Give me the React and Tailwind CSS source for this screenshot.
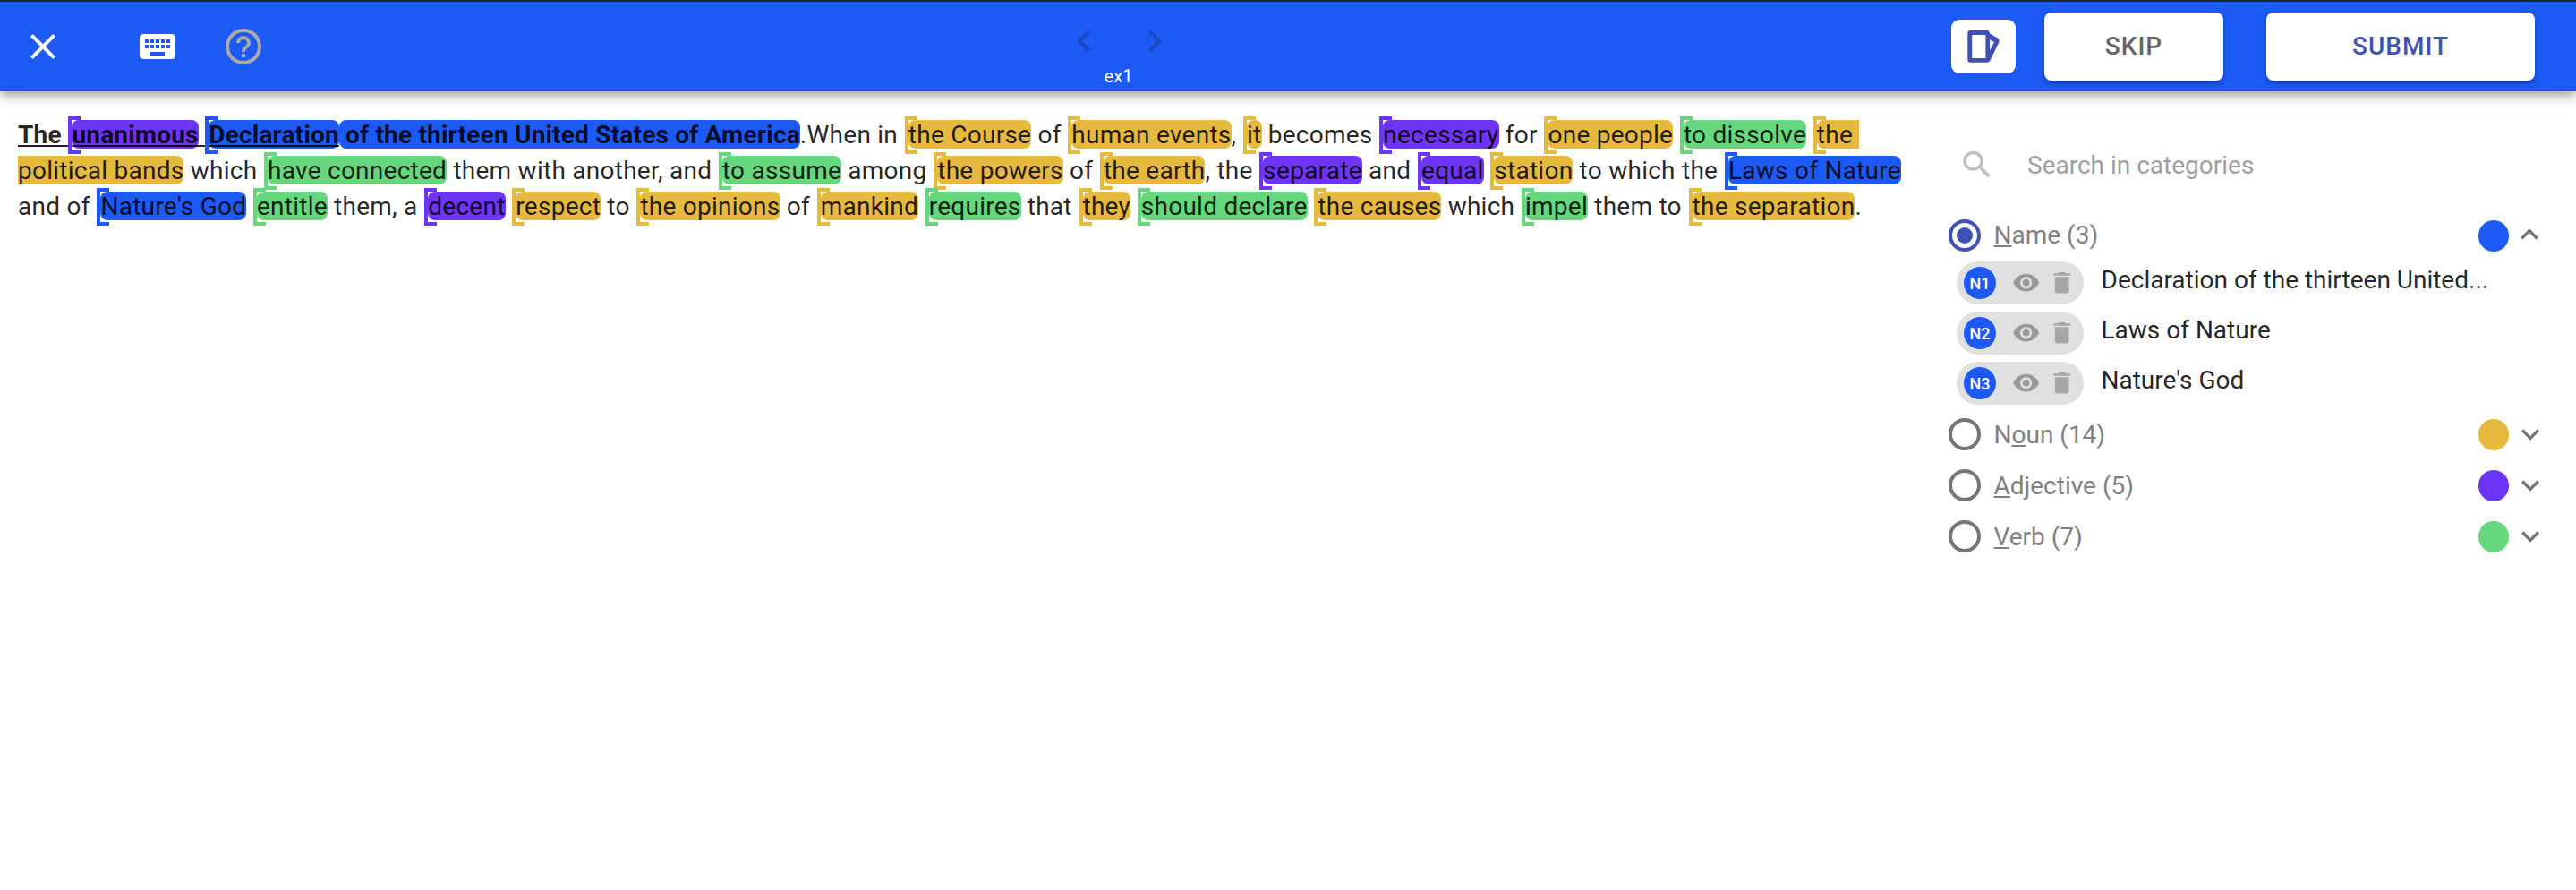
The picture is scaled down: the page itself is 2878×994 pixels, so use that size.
import React from "react";

const FILL = {
  name: "bg-[#1d5af5]",
  noun: "bg-[#e6b93f]",
  adj: "bg-[#6d34f6]",
  verb: "bg-[#66d77c]",
};
const EDGE = {
  name: "border-[#1d5af5]",
  noun: "border-[#e6b93f]",
  adj: "border-[#6d34f6]",
  verb: "border-[#66d77c]",
};

const HEADING = [
  { t: "The ", u: true },
  { t: "unanimous", c: "adj", u: true },
  { t: " ", u: true },
  { t: "Declaration", c: "name", u: true },
  { t: " of the thirteen United States of America", c: "name", cont: true },
];

const LINES = [
  [
    { t: ".When in " },
    { t: "the Course", c: "noun" },
    { t: " of " },
    { t: "human events", c: "noun" },
    { t: ", " },
    { t: "it", c: "noun" },
    { t: " becomes " },
    { t: "necessary", c: "adj" },
    { t: " for " },
    { t: "one people", c: "noun" },
    { t: " " },
    { t: "to dissolve", c: "verb" },
    { t: " " },
    { t: "the ", c: "noun", open: true },
  ],
  [
    { t: "political bands", c: "noun", tail: true },
    { t: " which " },
    { t: "have connected", c: "verb" },
    { t: " them with another, and " },
    { t: "to assume", c: "verb" },
    { t: " among " },
    { t: "the powers", c: "noun" },
    { t: " of " },
    { t: "the earth", c: "noun" },
    { t: ", the " },
    { t: "separate", c: "adj" },
    { t: " and " },
    { t: "equal", c: "adj" },
    { t: " " },
    { t: "station", c: "noun" },
    { t: " to which the " },
    { t: "Laws of Nature", c: "name" },
  ],
  [
    { t: "and of " },
    { t: "Nature's God", c: "name" },
    { t: " " },
    { t: "entitle", c: "verb" },
    { t: " them, a " },
    { t: "decent", c: "adj" },
    { t: " " },
    { t: "respect", c: "noun" },
    { t: " to " },
    { t: "the opinions", c: "noun" },
    { t: " of " },
    { t: "mankind", c: "noun" },
    { t: " " },
    { t: "requires", c: "verb" },
    { t: " that " },
    { t: "they", c: "noun" },
    { t: " " },
    { t: "should declare", c: "verb" },
    { t: " " },
    { t: "the causes", c: "noun" },
    { t: " which " },
    { t: "impel", c: "verb" },
    { t: " them to " },
    { t: "the separation", c: "noun" },
    { t: "." },
  ],
];

function Segment({ s }) {
  const line = s.u ? "underline decoration-2 underline-offset-[2px] [text-decoration-skip-ink:none]" : "";
  if (!s.c) return <span className={`h-8 ${line}`}>{s.t}</span>;
  const shape = s.open ? "rounded-l-lg" : s.tail ? "rounded-r-lg" : "rounded-lg";
  const bracket = !s.cont && !s.tail;
  return (
    <span className={`relative h-8 ${FILL[s.c]} ${shape} ${line} ${bracket ? "ml-[4.5px]" : ""}`}>
      {bracket && (
        <span className={`absolute -left-1 -top-1 h-[42px] w-[14px] border-4 border-r-0 ${EDGE[s.c]}`} />
      )}
      <span className="relative">{s.t}</span>
    </span>
  );
}

function Icon({ d, className }) {
  return (
    <svg viewBox="0 0 24 24" fill="currentColor" className={`shrink-0 ${className}`}>
      <path d={d} />
    </svg>
  );
}

const CLOSE = "M19 6.41L17.59 5 12 10.59 6.41 5 5 6.41 10.59 12 5 17.59 6.41 19 12 13.41 17.59 19 19 17.59 13.41 12z";
const KEYBOARD = "M20 5H4c-1.1 0-1.99.9-1.99 2L2 17c0 1.1.9 2 2 2h16c1.1 0 2-.9 2-2V7c0-1.1-.9-2-2-2zm-9 3h2v2h-2V8zm0 3h2v2h-2v-2zM8 8h2v2H8V8zm0 3h2v2H8v-2zm-1 2H5v-2h2v2zm0-3H5V8h2v2zm9 7H8v-2h8v2zm0-4h-2v-2h2v2zm0-3h-2V8h2v2zm3 3h-2v-2h2v2zm0-3h-2V8h2v2z";
const HELP = "M11 18h2v-2h-2v2zm1-16C6.48 2 2 6.48 2 12s4.48 10 10 10 10-4.48 10-10S17.52 2 12 2zm0 18c-4.41 0-8-3.59-8-8s3.59-8 8-8 8 3.59 8 8-3.59 8-8 8zm0-14c-2.21 0-4 1.79-4 4h2c0-1.1.9-2 2-2s2 .9 2 2c0 2-3 1.75-3 5h2c0-2.25 3-2.5 3-5 0-2.21-1.79-4-4-4z";
const LEFT = "M15.41 7.41L14 6l-6 6 6 6 1.41-1.41L10.83 12z";
const RIGHT = "M10 6L8.59 7.41 13.17 12l-4.58 4.59L10 18l6-6z";
const LESS = "M12 8l-6 6 1.41 1.41L12 10.83l4.59 4.58L18 14z";
const MORE = "M16.59 8.59L12 13.17 7.41 8.59 6 10l6 6 6-6z";
const EYE = "M12 4.5C7 4.5 2.73 7.61 1 12c1.73 4.39 6 7.5 11 7.5s9.27-3.11 11-7.5c-1.73-4.39-6-7.5-11-7.5zM12 17c-2.76 0-5-2.24-5-5s2.24-5 5-5 5 2.24 5 5-2.24 5-5 5zm0-8c-1.66 0-3 1.34-3 3s1.34 3 3 3 3-1.34 3-3-1.34-3-3-3z";
const TRASH = "M6 19c0 1.1.9 2 2 2h8c1.1 0 2-.9 2-2V7H6v12zM19 4h-3.5l-1-1h-5l-1 1H5v2h14V4z";
const SEARCH = "M15.5 14h-.79l-.28-.27C15.41 12.59 16 11.11 16 9.5 16 5.91 13.09 3 9.5 3S3 5.91 3 9.5 5.91 16 9.5 16c1.61 0 3.09-.59 4.23-1.57l.27.28v.79l5 4.99L20.49 19l-4.99-5zm-6 0C7.01 14 5 11.99 5 9.5S7.01 5 9.5 5 14 7.01 14 9.5 11.99 14 9.5 14z";

const RAISED = "shadow-[0_6px_2px_-4px_rgba(0,0,0,0.2),0_4px_4px_0_rgba(0,0,0,0.14),0_2px_10px_0_rgba(0,0,0,0.12)]";

function Header() {
  return (
    <header className="relative z-10 flex h-[102px] items-center border-t-2 border-[#222529] bg-[#1d5af5] pl-6 pr-[46px] shadow-[0_4px_8px_-2px_rgba(0,0,0,0.2),0_8px_10px_0_rgba(0,0,0,0.14),0_2px_20px_0_rgba(0,0,0,0.12)]">
      <Icon d={CLOSE} className="size-12 text-white" />
      <Icon d={KEYBOARD} className="ml-20 size-12 text-white" />
      <Icon d={HELP} className="ml-12 size-12 text-[#a9a9a9]" />
      <div className="ml-[891px] flex h-full w-[127px] flex-col pt-5">
        <div className="flex justify-between text-[#1947bd]">
          <Icon d={LEFT} className="size-12" />
          <Icon d={RIGHT} className="size-12" />
        </div>
        <span className="mt-[3px] pr-[2px] text-center text-[20px] leading-6 text-white">ex1</span>
      </div>
      <div className="ml-auto flex items-center">
        <button className="flex h-[60px] w-[72px] items-center justify-center rounded-[9px] bg-white text-[#3f51b5]">
          <svg viewBox="0 0 36 36" fill="currentColor" fillRule="evenodd" className="size-9">
            <path d="M3.5 0H22q2.600 0 3 3.600L33.500 8.200Q36.500 10 35.200 13.600L26 32.500Q24.400 35.700 21.500 35.700H3.500Q0.300 35.700 0.300 32.500V3.200Q0.300 0 3.500 0ZM5.200 5V31H20.400V5ZM25 10.300V22.500L30 13Z" />
          </svg>
        </button>
        <button className={`ml-8 h-[76px] w-[200px] rounded-lg bg-white text-[28px] font-medium tracking-[1px] text-[#666] ${RAISED}`}>
          SKIP
        </button>
        <button className={`ml-12 h-[76px] w-[300px] rounded-lg bg-white text-[28px] font-medium tracking-[1px] text-[#3f51b5] ${RAISED}`}>
          SUBMIT
        </button>
      </div>
    </header>
  );
}

function Category({ before = "", hotkey, after, dot, open, className = "" }) {
  return (
    <div className={`flex h-14 items-center ${className}`}>
      <span
        className={`flex size-9 items-center justify-center rounded-full border-4 ${open ? "border-[#3f51b5]" : "border-[#757575]"}`}
      >
        {open && <span className="size-[18px] rounded-full bg-[#3f51b5]" />}
      </span>
      <span className={`ml-[14.5px] text-[28px] leading-8 text-[#808080] ${open ? "" : "pt-[2px]"}`}>
        {before}
        <span className="underline decoration-2 underline-offset-[2px]">{hotkey}</span>
        {after}
      </span>
      <span className={`ml-auto h-[35px] w-[34px] rounded-full ${dot}`} />
      <Icon
        d={open ? LESS : MORE}
        className={`size-10 text-[#757575] ${open ? "mb-[2px] ml-[3px] mr-8" : "ml-1 mr-[31px]"}`}
      />
    </div>
  );
}

function Entry({ id, text }) {
  return (
    <div className="flex h-12">
      <div className="flex h-12 w-[142px] items-center rounded-full bg-[#e0e0e0] pl-2">
        <span className="flex size-9 items-center justify-center rounded-full bg-[#1d5af5] text-[18px] font-medium text-white">
          {id}
        </span>
        <Icon d={EYE} className="ml-[18px] size-[31.300px] text-[#999]" />
        <Icon d={TRASH} className="ml-[9px] size-[31.300px] text-[#a6a6a6]" />
      </div>
      <span className="ml-[19.5px] pt-[5px] text-[28px] leading-8 text-black/87">{text}</span>
    </div>
  );
}

export default function App() {
  return (
    <div className="min-h-[994px] bg-white font-[Roboto,sans-serif]">
      <Header />
      <main className="flex">
        <article className="flex w-[2177px] flex-col pl-5 pt-7 text-[28px] leading-[34px] text-black/87">
          {LINES.map((line, i) => (
            <div key={i} className="flex h-10 items-start pt-1 whitespace-pre tracking-[0.26px]">
              {i === 0 && (
                <span className="flex font-bold tracking-[0.19px]">
                  {HEADING.map((s, j) => (
                    <Segment key={j} s={s} />
                  ))}
                </span>
              )}
              {line.map((s, j) => (
                <Segment key={j} s={s} />
              ))}
            </div>
          ))}
        </article>
        <aside className="flex w-[701px] flex-col">
          <label className="flex h-[133px] items-center pt-[31px]">
            <svg viewBox="0 0 24 24" preserveAspectRatio="none" fill="currentColor" className="ml-[10.5px] h-10 w-[42px] text-[#bdbdbd]">
              <path d={SEARCH} />
            </svg>
            <input
              placeholder="Search in categories"
              className="ml-[35.5px] mt-[2px] h-8 w-[400px] text-[28px] leading-8 outline-none placeholder:text-[#9e9e9e]"
            />
          </label>
          <Category hotkey="N" after="ame (3)" dot="bg-[#1d5af5]" open />
          <div className="mb-[5px] ml-[9px] mt-px flex flex-col gap-2">
            <Entry id="N1" text="Declaration of the thirteen United..." />
            <Entry id="N2" text="Laws of Nature" />
            <Entry id="N3" text="Nature's God" />
          </div>
          <Category before="N" hotkey="o" after="un (14)" dot="bg-[#e6b93f]" />
          <Category hotkey="A" after="djective (5)" dot="bg-[#6d34f6]" className="mt-px" />
          <Category hotkey="V" after="erb (7)" dot="bg-[#66d77c]" className="mt-px" />
        </aside>
      </main>
    </div>
  );
}
